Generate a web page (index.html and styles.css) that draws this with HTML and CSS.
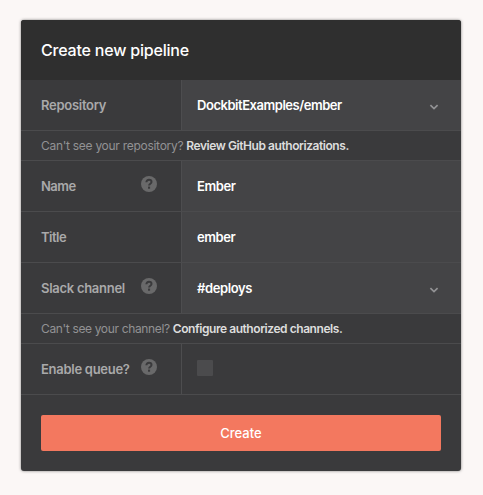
FILE: index.html
```html
<!DOCTYPE html>
<html lang="en">
<head>
<meta charset="utf-8">
<title>Create new pipeline</title>
<link rel="stylesheet" href="styles.css">
</head>
<body>
<svg class="defs" width="0" height="0" aria-hidden="true">
  <symbol id="help" viewBox="0 0 16 16">
    <circle cx="8" cy="8" r="8" fill="#69696a"/>
    <path d="M5.4 6.3C5.4 4.7 6.5 3.8 8 3.8s2.5.9 2.5 2.2c0 1.8-2.4 1.7-2.4 3.6" fill="none" stroke="#3a3a3c" stroke-width="2"/>
    <rect x="7" y="10.6" width="2.1" height="2.1" fill="#3a3a3c"/>
  </symbol>
  <symbol id="chevron" viewBox="0 0 10 6">
    <path d="M1.4 1.1 5 4.6 8.6 1.1" fill="none" stroke="#929294" stroke-width="1.7"/>
  </symbol>
</svg>
<form class="card">
  <h1 class="header">Create new pipeline</h1>
  <div class="row">
    <div class="label">Repository</div>
    <div class="value path">DockbitExamples/ember<svg class="chevron"><use href="#chevron"/></svg></div>
  </div>
  <p class="hint"><span>Can't see your repository?</span><a>Review GitHub authorizations.</a></p>
  <div class="row">
    <div class="label tight">Name<svg class="help"><use href="#help"/></svg></div>
    <div class="value">Ember</div>
  </div>
  <div class="row">
    <div class="label tight">Title</div>
    <div class="value">ember</div>
  </div>
  <div class="row">
    <div class="label">Slack channel<svg class="help"><use href="#help"/></svg></div>
    <div class="value">#deploys<svg class="chevron"><use href="#chevron"/></svg></div>
  </div>
  <p class="hint narrow"><span>Can't see your channel?</span><a>Configure authorized channels.</a></p>
  <div class="row">
    <div class="label">Enable queue?<svg class="help"><use href="#help"/></svg></div>
    <div class="value plain"><span class="checkbox"></span></div>
  </div>
  <div class="footer"><button class="create" type="button">Create</button></div>
</form>
</body>
</html>
```

FILE: styles.css
```css
* { box-sizing: border-box; }
body {
  margin: 0;
  padding: 20px 22px 24px 21px;
  background: #fbf7f6;
  font-family: Inter, "Liberation Sans", sans-serif;
  font-size: 13px;
  white-space: nowrap;
}
.defs { display: block; }
.card {
  width: 440px;
  height: 451px;
  background: #3a3a3c;
  border-radius: 3px;
  overflow: hidden;
  box-shadow: 0 0 3px rgba(0, 0, 0, .5);
}
.header {
  display: flex;
  align-items: center;
  height: 60px;
  margin: 0;
  padding: 0 20px;
  background: #2f2f2f;
  color: #fff;
  font-size: 16px;
  font-weight: 500;
  letter-spacing: -.2px;
}
.row {
  display: flex;
  height: 51px;
  border-bottom: 1px solid #4b4b4d;
}
.label {
  display: flex;
  align-items: center;
  justify-content: space-between;
  width: 160px;
  padding: 0 24px 0 20px;
  color: #a9a9aa;
  font-weight: 600;
  letter-spacing: -.28px;
}
.label.tight { letter-spacing: -.5px; }
.value {
  display: flex;
  flex: 1;
  align-items: center;
  justify-content: space-between;
  padding: 0 22px 0 15px;
  border-left: 1px solid #4d4d4f;
  background: #444446;
  color: #fff;
  font-weight: 600;
  letter-spacing: -.4px;
}
.value.path { letter-spacing: -.46px; }
.value.plain { background: none; }
.help { width: 16px; height: 16px; margin-bottom: 4px; }
.chevron { width: 10px; height: 6px; margin-top: 4px; }
.hint {
  display: flex;
  align-items: center;
  gap: 3px;
  height: 30px;
  margin: 0;
  padding: 0 20px;
  border-bottom: 1px solid #4b4b4d;
  color: #929294;
  font-size: 12px;
  letter-spacing: -.28px;
}
.hint a {
  color: #ddd;
  font-weight: 600;
  letter-spacing: -.44px;
}
.hint.narrow { letter-spacing: -.35px; }
.checkbox {
  width: 16px;
  height: 16px;
  margin-bottom: 2px;
  border-radius: 1px;
  background: #4b4b4d;
}
.footer { padding: 20px; }
.create {
  display: block;
  width: 100%;
  height: 36px;
  padding: 0;
  border: 0;
  border-radius: 2px;
  background: #f3785f;
  color: #fff;
  font: 500 13px Inter, sans-serif;
}
```
